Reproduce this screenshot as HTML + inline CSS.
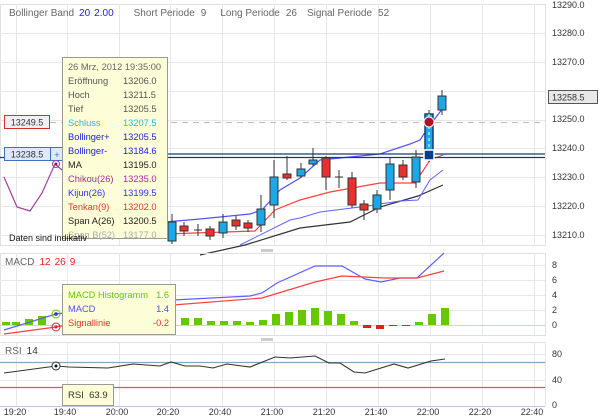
<!DOCTYPE html>
<html><head><meta charset="utf-8"><style>
html,body{margin:0;padding:0;background:#fff;}
svg{display:block;font-family:"Liberation Sans",sans-serif;}
</style></head><body>
<svg width="600" height="416" viewBox="0 0 600 416" xmlns="http://www.w3.org/2000/svg">
<rect width="600" height="416" fill="#fff"/>
<g stroke="#e8e8e8" stroke-width="1" fill="none">
<path d="M0.5 4.5H545.5V245.5H0.5Z" stroke="#e0e0e0"/>
<path d="M0 33.5H545M0 62.5H545M0 91.5H545M0 120.5H545M0 148.5H545M0 177.5H545M0 206.5H545M0 235.5H545"/>
<path d="M16.5 4V245M67.5 4V245M119.5 4V245M170.5 4V245M222.5 4V245M274.5 4V245M326.5 4V245M378.5 4V245M430.5 4V245M482.5 4V245M534.5 4V245"/>
</g>
<path d="M50 122.5H545" stroke="#d8b0b0" stroke-dasharray="6,5"/>
<polyline fill="none" stroke="#a040a0" stroke-width="1.2" points="4,177 17,207 30,211 42,193 55,164 62,170"/>
<polyline fill="none" stroke="#333" stroke-width="1.2" points="200,255 245,245 300,228 350,222 380,207 418,196 443,185"/>
<polyline fill="none" stroke="#6060ff" stroke-width="1" points="240,245 290,220 300,218 320,212 360,207 400,201 418,200 430,180 443,170"/>
<polyline fill="none" stroke="#ff4040" stroke-width="1.2" points="165,234 255,231 275,210 300,200 330,192 380,183 415,183 430,160 443,155"/>
<polyline fill="none" stroke="#5050ff" stroke-width="1.2" points="165,222 200,219 250,214 262,210 280,190 300,178 320,160 380,154 410,144 420,140 430,125 443,108"/>
<path d="M63 154H545M0 157.5H545" stroke="#1a3a70" stroke-width="1.3"/>
<g stroke="#333" stroke-width="1">
<path d="M172 214V244M184 222V236M198 224V236M210 226V240M223 214V238M236 216V230M248 220V232M261 195V232M274 160V218M287 156V180M301 163V178M313 148V166M326 156V190M339 170V188M352 172V208M364 200V220M377 190V213M390 158V200M403 160V180M416 150V188M429 110V162M442 90V115"/>
<path d="M194 230H202M335 177H343" />
<g fill="#1aa8e8">
<rect x="168" y="222" width="8" height="19"/><rect x="219" y="222" width="8" height="11"/>
<rect x="257" y="209" width="8" height="16"/><rect x="270" y="177" width="8" height="28"/>
<rect x="297" y="169" width="8" height="7"/><rect x="309" y="160" width="8" height="4"/>
<rect x="373" y="195" width="8" height="14"/><rect x="386" y="164" width="8" height="26"/>
<rect x="412" y="157" width="8" height="25"/><rect x="438" y="96" width="8" height="14"/>
</g>
<g fill="#e83030">
<rect x="180" y="226" width="8" height="5"/><rect x="206" y="229" width="8" height="7"/>
<rect x="232" y="220" width="8" height="6"/><rect x="244" y="223" width="8" height="5"/>
<rect x="283" y="174" width="8" height="4"/><rect x="322" y="158" width="8" height="19"/>
<rect x="348" y="178" width="8" height="27"/><rect x="360" y="204" width="8" height="6"/>
<rect x="399" y="165" width="8" height="12"/>
</g>
<rect x="425" y="114" width="8" height="38" fill="#1aa8e8" stroke="#1a3a70" stroke-width="1.5"/>
</g>
<path d="M429 114V160" stroke="#fff" stroke-dasharray="3,3"/>
<rect x="424" y="150" width="10" height="10" fill="#0a3c8c" stroke="#fff" stroke-width="1.5"/>
<circle cx="429" cy="122" r="5" fill="#b01020" stroke="#fff" stroke-width="1"/>
<rect x="4.5" y="115.5" width="45" height="13" fill="#f0f0f0" stroke="#d03030"/>
<text x="27" y="125.5" font-size="9" text-anchor="middle" fill="#333">13249.5</text>
<rect x="4.5" y="147.5" width="59" height="13" fill="#dde8f8" stroke="#4070c0"/>
<path d="M50.5 147.5V160.5" stroke="#4070c0"/>
<text x="27" y="157.5" font-size="9" text-anchor="middle" fill="#333">13238.5</text>
<text x="57" y="158" font-size="9" text-anchor="middle" fill="#4070c0">+</text>
<circle cx="56" cy="164" r="3.5" fill="none" stroke="#a040a0"/><circle cx="56" cy="164" r="1.5" fill="#702070"/>
<text y="16" font-size="10" fill="#666"><tspan x="9">Bollinger Band</tspan><tspan fill="#2020ee" dx="5">20</tspan><tspan fill="#2020ee" dx="4">2.00</tspan><tspan dx="20">Short Periode</tspan><tspan dx="6">9</tspan><tspan dx="14">Long Periode</tspan><tspan dx="6">26</tspan><tspan dx="10">Signal Periode</tspan><tspan dx="6">52</tspan></text>
<g font-size="9" fill="#333">
<text x="552" y="8">13290.0</text><text x="552" y="36">13280.0</text><text x="552" y="65">13270.0</text>
<text x="552" y="122">13250.0</text><text x="552" y="151">13240.0</text><text x="552" y="180">13230.0</text>
<text x="552" y="209">13220.0</text><text x="552" y="238">13210.0</text>
</g>
<rect x="548.5" y="90.5" width="49" height="13" fill="#e8e8e8" stroke="#555"/>
<text x="552" y="100.5" font-size="9" fill="#333">13258.5</text>
<rect x="62.5" y="57.5" width="105" height="181" fill="#fdfdd8" stroke="#999"/>
<g font-size="9.3">
<text x="68" y="70" fill="#666">26 Mrz, 2012 19:35:00</text>
<g fill="#555"><text x="68" y="84">Eröffnung</text><text x="123" y="84">13206.0</text>
<text x="68" y="98">Hoch</text><text x="123" y="98">13211.5</text>
<text x="68" y="112">Tief</text><text x="123" y="112">13205.5</text></g>
<g fill="#20b8e8"><text x="68" y="126">Schluss</text><text x="123" y="126">13207.5</text></g>
<g fill="#2020dd"><text x="68" y="140">Bollinger+</text><text x="123" y="140">13205.5</text>
<text x="68" y="154">Bollinger-</text><text x="123" y="154">13184.6</text></g>
<g fill="#222"><text x="68" y="168">MA</text><text x="123" y="168">13195.0</text></g>
<g fill="#a03090"><text x="68" y="182">Chikou(26)</text><text x="123" y="182">13235.0</text></g>
<g fill="#3030ee"><text x="68" y="196">Kijun(26)</text><text x="123" y="196">13199.5</text></g>
<g fill="#ee3030"><text x="68" y="210">Tenkan(9)</text><text x="123" y="210">13202.0</text></g>
<g fill="#222"><text x="68" y="224">Span A(26)</text><text x="123" y="224">13200.5</text></g>
<g fill="#aaa"><text x="68" y="238">Span B(52)</text><text x="123" y="238">13177.0</text></g>
</g>
<text x="9" y="241" font-size="9" fill="#111">Daten sind indikativ</text>
<rect x="261" y="249" width="12" height="3" fill="#ccc"/>
<rect x="261" y="338" width="12" height="3" fill="#ccc"/>
<g stroke="#e8e8e8" fill="none">
<path d="M0.5 253.5H545.5V335.5H0.5Z" stroke="#e0e0e0"/>
<path d="M0 265.5H545M0 280.5H545M0 295.5H545M0 310.5H545"/>
<path d="M16.5 253V335M67.5 253V335M119.5 253V335M170.5 253V335M222.5 253V335M274.5 253V335M326.5 253V335M378.5 253V335M430.5 253V335M482.5 253V335M534.5 253V335"/>
</g>
<path d="M0 325.5H545" stroke="#c8d4e8"/>
<text y="265" font-size="10"><tspan x="5" fill="#666">MACD</tspan><tspan dx="5" fill="#ee2020">12</tspan><tspan dx="4" fill="#ee2020">26</tspan><tspan dx="4" fill="#ee2020">9</tspan></text>
<g font-size="9" fill="#333"><text x="552" y="268">8</text><text x="552" y="283">6</text><text x="552" y="298">4</text><text x="552" y="313">2</text><text x="552" y="328">0</text>
<text x="552" y="357">80</text><text x="552" y="383">40</text><text x="552" y="408">0</text></g>
<g fill="#66c800">
<rect x="2" y="322" width="8" height="3"/><rect x="12" y="322" width="8" height="3"/><rect x="25" y="319" width="8" height="6"/><rect x="38" y="316" width="8" height="9"/>
<rect x="181" y="318" width="8" height="7"/><rect x="194" y="318" width="8" height="7"/><rect x="207" y="321" width="8" height="4"/><rect x="220" y="321" width="8" height="4"/>
<rect x="233" y="321" width="8" height="4"/><rect x="246" y="322" width="8" height="3"/><rect x="259" y="320" width="8" height="5"/><rect x="272" y="314" width="8" height="11"/>
<rect x="285" y="312" width="8" height="13"/><rect x="298" y="310" width="8" height="15"/><rect x="311" y="308" width="8" height="17"/><rect x="324" y="311" width="8" height="14"/>
<rect x="337" y="314" width="8" height="11"/><rect x="350" y="321" width="8" height="4"/><rect x="415" y="322" width="8" height="3"/><rect x="428" y="314" width="8" height="11"/><rect x="441" y="308" width="8" height="17"/>
</g>
<g fill="#e02020"><rect x="363" y="325" width="8" height="3"/><rect x="376" y="325" width="8" height="4"/><rect x="389" y="325" width="8" height="1"/><rect x="402" y="325" width="8" height="1"/></g>
<polyline fill="none" stroke="#6060ff" stroke-width="1.2" points="4,330 56,314 173,300 250,296 262,293 277,283 315,266 342,266 365,279 381,282 400,278 417,278 444,253"/>
<polyline fill="none" stroke="#ff4040" stroke-width="1.2" points="4,334 56,327 173,305 262,298 315,282 342,276 385,278 417,278 444,271"/>
<circle cx="56" cy="314" r="4" fill="none" stroke="#66c800"/><circle cx="56" cy="314" r="1.8" fill="#3030cc"/>
<circle cx="56" cy="327" r="4" fill="none" stroke="#e02020"/><circle cx="56" cy="327" r="1.5" fill="#e02020"/>
<rect x="62.5" y="284.5" width="113" height="50" fill="#fdfdd8" stroke="#999"/>
<g font-size="9.3"><text x="68" y="298" fill="#66c800">MACD Histogramm</text><text x="169" y="298" fill="#66c800" text-anchor="end">1.6</text>
<text x="68" y="312" fill="#5050ee">MACD</text><text x="169" y="312" fill="#5050ee" text-anchor="end">1.4</text>
<text x="68" y="326" fill="#ee3030">Signallinie</text><text x="169" y="326" fill="#ee3030" text-anchor="end">-0.2</text></g>
<g stroke="#e8e8e8" fill="none">
<path d="M0.5 342.5H545.5" stroke="#e0e0e0"/><path d="M545.5 342V406"/>
<path d="M0 354.5H545M0 380.5H545"/>
<path d="M16.5 342V406M67.5 342V406M119.5 342V406M170.5 342V406M222.5 342V406M274.5 342V406M326.5 342V406M378.5 342V406M430.5 342V406M482.5 342V406M534.5 342V406"/>
</g>
<path d="M0 362.5H545" stroke="#80a8c0" stroke-width="1.2"/>
<path d="M0 387.5H545" stroke="#f05050" stroke-width="1.2"/>
<path d="M0 406.5H545" stroke="#b8c8e0"/>
<text y="354" font-size="10"><tspan x="5" fill="#666">RSI</tspan><tspan dx="5" fill="#333">14</tspan></text>
<polyline fill="none" stroke="#333" stroke-width="1.1" points="4,373 56,366 69,367 108,368 133,364 160,366 171,362 185,366 200,366 213,368 227,364 250,367 275,357 290,358 315,356 329,363 340,363 354,372 365,373 394,364 408,368 431,361 445,359"/>
<circle cx="56" cy="366" r="4" fill="#fff" stroke="#333"/><circle cx="56" cy="366" r="1.5" fill="#111"/>
<rect x="62.5" y="384.5" width="51" height="21" fill="#fdfdd8" stroke="#999"/>
<text x="68" y="398" font-size="9.5" fill="#333">RSI&#160;&#160;63.9</text>
<g font-size="9" fill="#333" text-anchor="middle">
<text x="15" y="415">19:20</text><text x="65" y="415">19:40</text><text x="117" y="415">20:00</text><text x="168" y="415">20:20</text>
<text x="220" y="415">20:40</text><text x="272" y="415">21:00</text><text x="324" y="415">21:20</text><text x="376" y="415">21:40</text>
<text x="428" y="415">22:00</text><text x="480" y="415">22:20</text><text x="532" y="415">22:40</text></g>
</svg>
</body></html>
